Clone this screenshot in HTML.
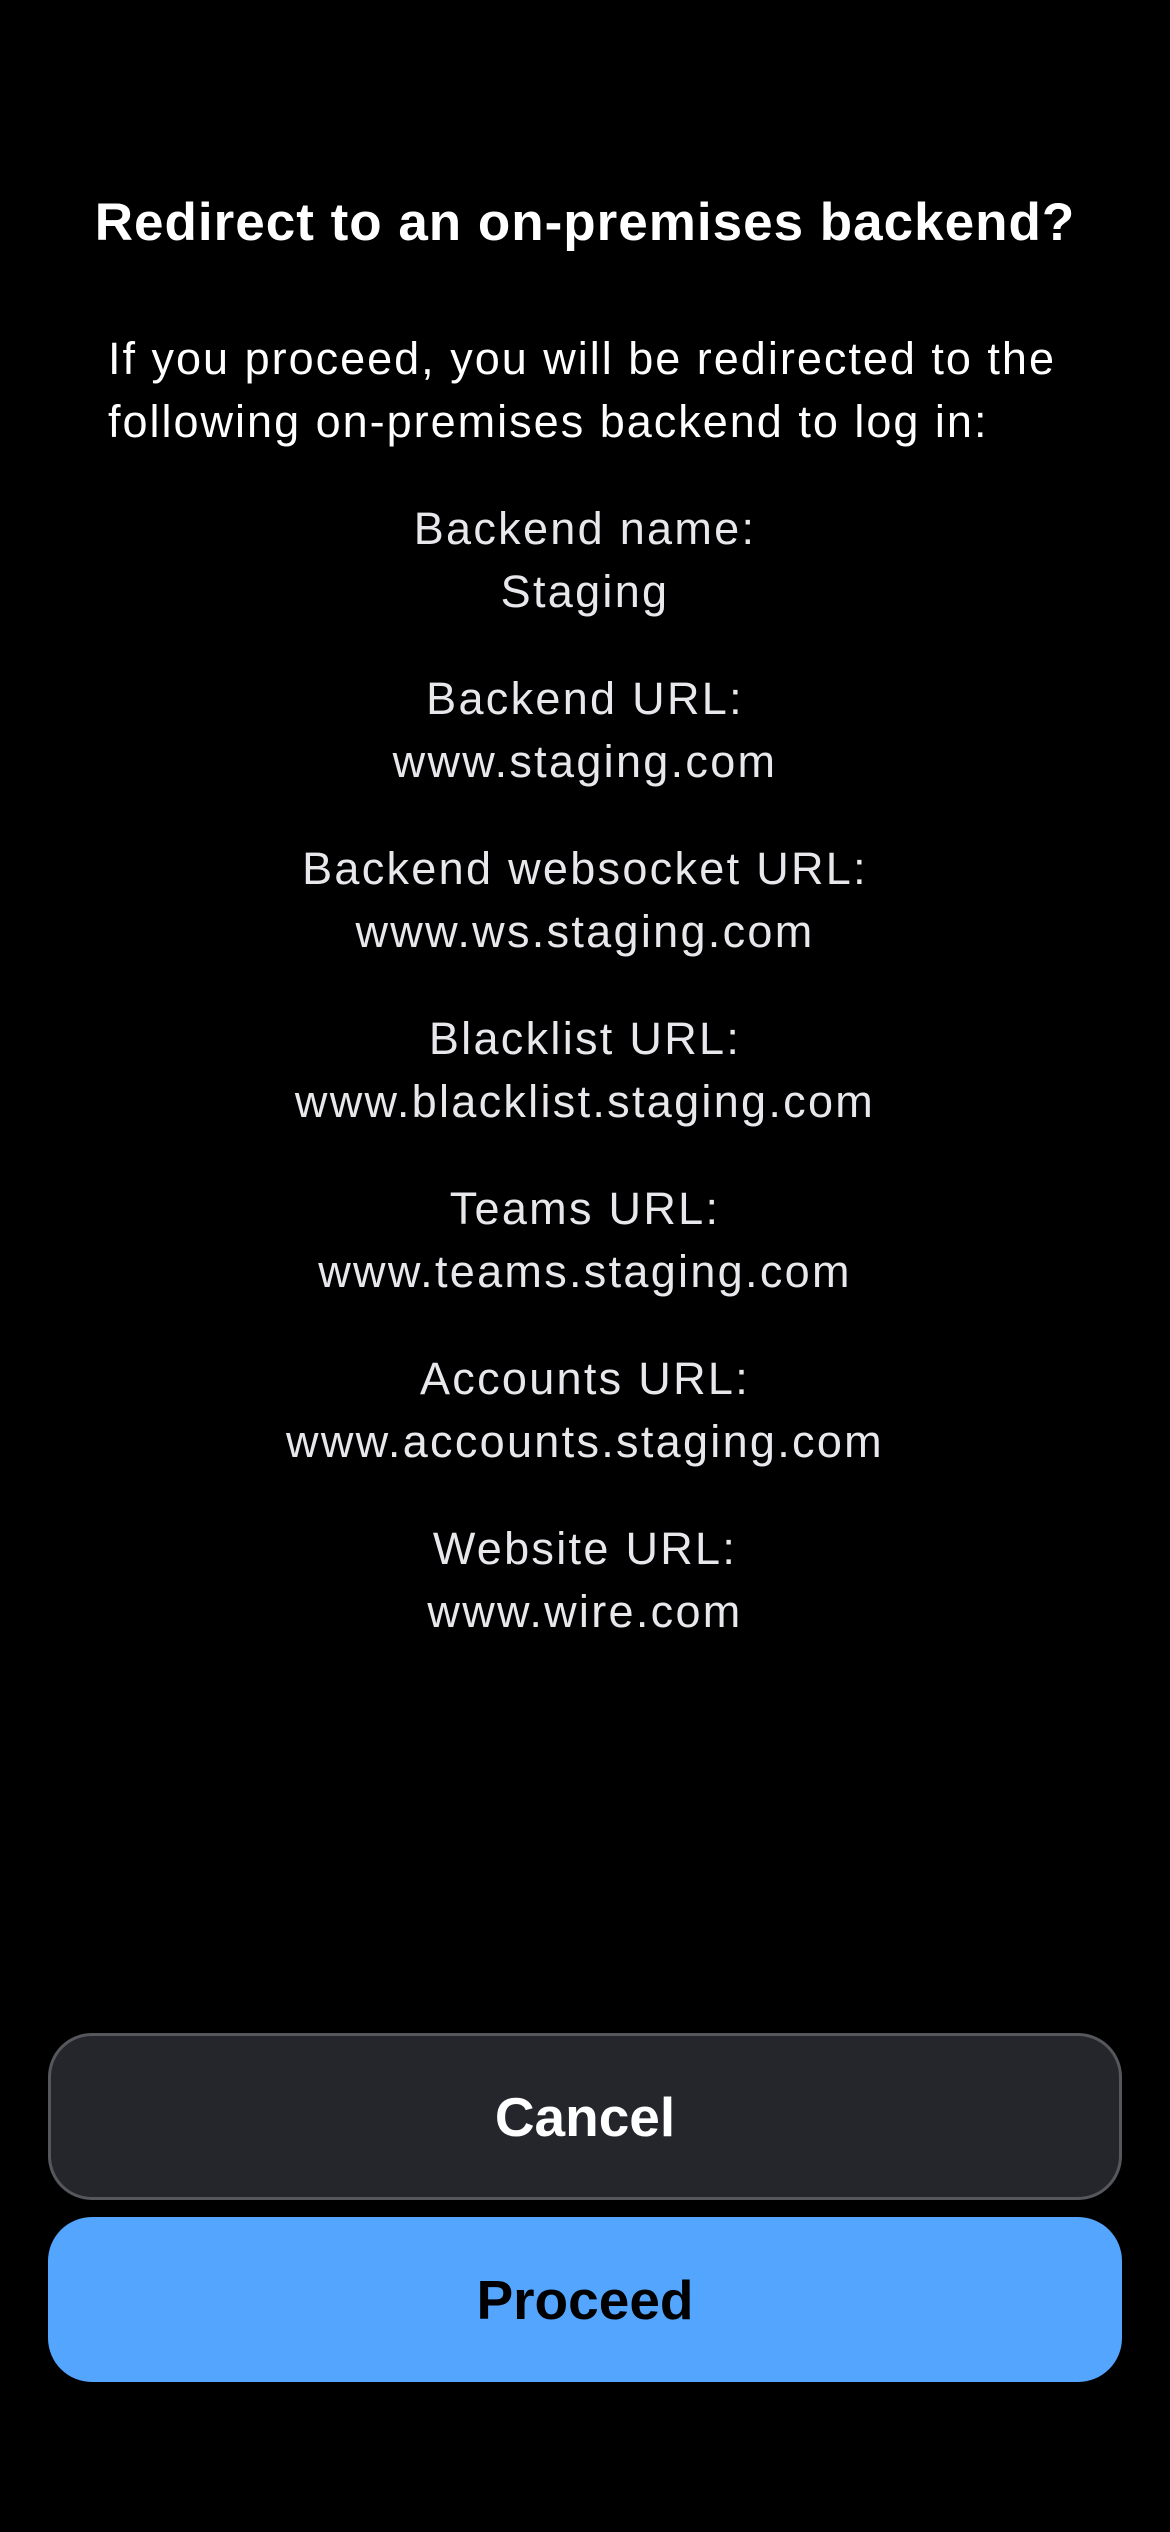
<!DOCTYPE html>
<html><head><meta charset="utf-8"><style>
html,body{margin:0;padding:0;background:#000;}
body{width:1170px;height:2532px;position:relative;overflow:hidden;font-family:"Liberation Sans",sans-serif;color:#fff;}
.t{position:absolute;left:0;width:1170px;text-align:center;white-space:nowrap;}
.title{font-weight:bold;font-size:53px;top:192px;letter-spacing:1px;}
.p{position:absolute;left:108px;font-size:45px;white-space:nowrap;letter-spacing:2px;}
.it{font-size:45px;color:#e8e8ec;letter-spacing:2.3px;}
.btn{position:absolute;left:48px;width:1074px;border-radius:44px;box-sizing:border-box;display:flex;align-items:center;justify-content:center;font-weight:bold;font-size:55px;}
.c{top:2033px;height:167px;background:#25262b;border:3px solid #55575c;color:#fff;}
.pr{top:2217px;height:165px;background:#54a5fe;color:#000;}
</style></head><body>
<div class="t title">Redirect to an on-premises backend?</div>
<div class="p" style="top:333px">If you proceed, you will be redirected to the</div>
<div class="p" style="top:396px">following on-premises backend to log in:</div>
<div class="t it" style="top:503px">Backend name:</div>
<div class="t it" style="top:566px">Staging</div>
<div class="t it" style="top:673px">Backend URL:</div>
<div class="t it" style="top:736px">www.staging.com</div>
<div class="t it" style="top:843px">Backend websocket URL:</div>
<div class="t it" style="top:906px">www.ws.staging.com</div>
<div class="t it" style="top:1013px">Blacklist URL:</div>
<div class="t it" style="top:1076px">www.blacklist.staging.com</div>
<div class="t it" style="top:1183px">Teams URL:</div>
<div class="t it" style="top:1246px">www.teams.staging.com</div>
<div class="t it" style="top:1353px">Accounts URL:</div>
<div class="t it" style="top:1416px">www.accounts.staging.com</div>
<div class="t it" style="top:1523px">Website URL:</div>
<div class="t it" style="top:1586px">www.wire.com</div>
<div class="btn c">Cancel</div>
<div class="btn pr">Proceed</div>
</body></html>
